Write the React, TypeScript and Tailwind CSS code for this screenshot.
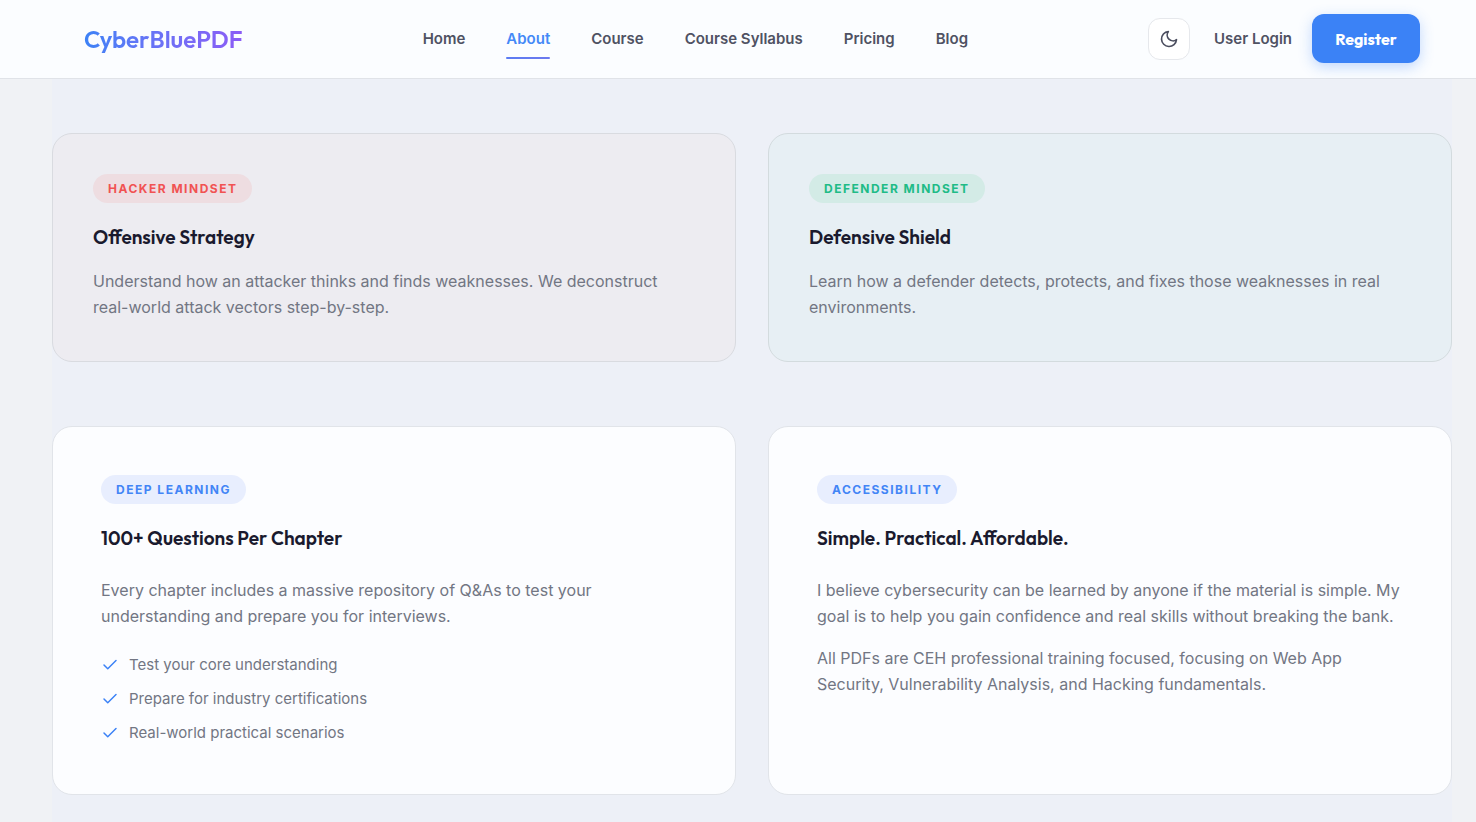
import { useState } from "react";
import type { ReactNode } from "react";
import { FiCheck, FiMoon } from "react-icons/fi";

const NAV_LINKS = ["Home", "About", "Course", "Course Syllabus", "Pricing", "Blog"];

const CHECKLIST = [
  "Test your core understanding",
  "Prepare for industry certifications",
  "Real-world practical scenarios",
];

const BADGE_STYLES = {
  red: "bg-[#eedde1] text-[#f15252]",
  green: "bg-[#d3ebe6] text-[#20bb86]",
  blue: "bg-[#e8eefe] text-[#4285f6]",
};

function Badge({ color, children }: { color: keyof typeof BADGE_STYLES; children: ReactNode }) {
  return (
    <span
      className={`flex h-[29px] w-fit items-center rounded-full px-[15px] text-xs font-bold uppercase tracking-[1.5px] ${BADGE_STYLES[color]}`}
    >
      {children}
    </span>
  );
}

function CardTitle({ children }: { children: ReactNode }) {
  return (
    <h2 className="mt-5 font-['Outfit','Lato',sans-serif] text-[19px] leading-[29px] font-semibold text-[#1a1a2e]">
      {children}
    </h2>
  );
}

function Header() {
  const [active, setActive] = useState("About");

  return (
    <header className="border-b border-[#e0e3e8] bg-[#fbfdff] pr-6 pl-[52px]">
      <div className="mx-auto flex h-[78px] max-w-[1400px] items-center justify-between px-8 pb-px">
        <a
          href="#home"
          className="bg-linear-to-r from-[#3b82f6] to-[#8b5cf6] bg-clip-text font-['Outfit','Lato',sans-serif] text-2xl font-semibold text-transparent"
        >
          CyberBluePDF
        </a>

        <nav className="flex gap-[41px]">
          {NAV_LINKS.map((link) => (
            <a
              key={link}
              href="#"
              onClick={() => setActive(link)}
              className={`relative py-2 text-[15px] leading-6 font-semibold ${
                active === link ? "text-[#4489f7]" : "text-[#4f5263]"
              }`}
            >
              {link}
              {active === link && (
                <span className="absolute inset-x-0 bottom-0 h-0.5 rounded-full bg-linear-to-r from-[#5b7cf3] to-[#6c79ee]" />
              )}
            </a>
          ))}
        </nav>

        <div className="flex items-center">
          <button
            type="button"
            aria-label="Toggle dark mode"
            className="flex size-[42px] items-center justify-center rounded-xl border border-[#e6e8ec] bg-white text-[#4a4d5e]"
          >
            <FiMoon size={20} />
          </button>
          <a href="#login" className="ml-6 text-[15px] leading-6 font-semibold text-[#4f5263]">
            User Login
          </a>
          <button
            type="button"
            className="ml-5 h-[49px] w-[108px] rounded-xl bg-[#3b82f6] font-['Outfit','Lato',sans-serif] text-base font-bold text-white shadow-[0_4px_14px_rgba(59,130,246,0.3)]"
          >
            Register
          </button>
        </div>
      </div>
    </header>
  );
}

export default function App() {
  return (
    <div className="flex min-h-screen flex-col bg-[#f0f2f5] font-['Inter',sans-serif] text-base leading-[26px] text-[#727683]">
      <Header />

      <main className="flex grow flex-col pr-6 pl-[52px]">
        <div className="mx-auto flex w-full max-w-[1400px] grow flex-col gap-16 bg-[#edf0f7] pt-[54px]">
          {/* Mindsets */}
          <section className="grid gap-8 md:grid-cols-2">
            <article className="rounded-[20px] border border-[#d9dbe0] bg-[#edecf1] px-10 pt-10 pb-[41px]">
              <Badge color="red">Hacker Mindset</Badge>
              <CardTitle>Offensive Strategy</CardTitle>
              <p className="mt-4">
                Understand how an attacker thinks and finds weaknesses. We deconstruct real-world attack
                vectors step-by-step.
              </p>
            </article>

            <article className="rounded-[20px] border border-[#d3dbde] bg-[#e7eff4] px-10 pt-10 pb-[41px]">
              <Badge color="green">Defender Mindset</Badge>
              <CardTitle>Defensive Shield</CardTitle>
              <p className="mt-4">
                Learn how a defender detects, protects, and fixes those weaknesses in real environments.
              </p>
            </article>
          </section>

          {/* Learning + accessibility */}
          <section className="grid gap-8 md:grid-cols-2">
            <article className="rounded-[20px] border border-[#e1e4e9] bg-[#fcfdff] px-12 pt-12 pb-[49px]">
              <Badge color="blue">Deep Learning</Badge>
              <CardTitle>100+ Questions Per Chapter</CardTitle>
              <p className="mt-6">
                Every chapter includes a massive repository of Q&amp;As to test your understanding and
                prepare you for interviews.
              </p>
              <ul className="mt-6 flex flex-col gap-[10px] text-[15px] leading-6">
                {CHECKLIST.map((item) => (
                  <li key={item} className="flex items-center gap-[10px]">
                    <FiCheck size={18} className="text-[#3b82f6]" />
                    {item}
                  </li>
                ))}
              </ul>
            </article>

            <article className="rounded-[20px] border border-[#e1e4e9] bg-[#fcfdff] px-12 pt-12 pb-[49px]">
              <Badge color="blue">Accessibility</Badge>
              <CardTitle>Simple. Practical. Affordable.</CardTitle>
              <p className="mt-6">
                I believe cybersecurity can be learned by anyone if the material is simple. My goal is to
                help you gain confidence and real skills without breaking the bank.
              </p>
              <p className="mt-4">
                All PDFs are CEH professional training focused, focusing on Web App Security,
                Vulnerability Analysis, and Hacking fundamentals.
              </p>
            </article>
          </section>
        </div>
      </main>
    </div>
  );
}
